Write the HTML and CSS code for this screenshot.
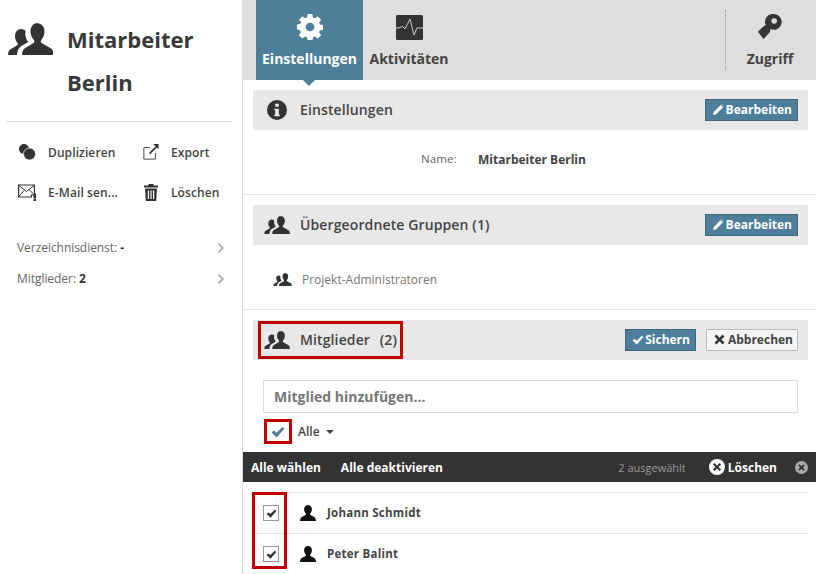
FILE: index.html
```html
<!DOCTYPE html>
<html lang="de">
<head>
<meta charset="utf-8">
<title>Mitarbeiter Berlin</title>
<link rel="stylesheet" href="styles.css">
</head>
<body>
<svg class="defs" width="0" height="0" aria-hidden="true">
  <symbol id="people" viewBox="0 0 45 32">
    <path d="M28.500 0c5 0 8 3.600 8 8.500 0 3.500-1.300 6.500-3.300 8.500-.7.800-.6 2.300.4 3l9.500 5.500c1.500.9 2 2.300 2.400 6.500H14c.3-4 1-5.500 2.500-6.500l9-5.500c1-.7 1.200-2.200.4-3-2-2-3.400-5-3.400-8.500 0-4.900 2.900-8.500 6.500-8.500z"/>
    <path d="M13 6c1.800 0 3.500.7 4.600 1.900-.9 3.800.2 8.100 2.600 11l-7.200 4.400c-1.500 1-3 3-3.600 5.700L9 32H0c.2-3.200.7-4.700 2.200-5.600l7-4.100c.8-.6.900-1.700.3-2.400C8 18.300 7 15.900 7 13.300 7 9 9.500 6 13 6z"/>
  </symbol>
  <symbol id="person" viewBox="0 0 16 16">
    <path d="M8 0c2.400 0 3.900 1.800 3.900 4.200 0 1.700-.7 3.200-1.600 4.200-.4.400-.3 1.100.2 1.500l3.700 2.200c1.100.7 1.600 1.700 1.800 3.900H0c.2-2.200.7-3.200 1.800-3.900l3.700-2.200c.5-.4.600-1.100.2-1.500-.9-1-1.600-2.500-1.600-4.200C4.100 1.800 5.600 0 8 0z"/>
  </symbol>
  <symbol id="check" viewBox="0 0 14 12">
    <path d="M.5 6.500l2.300-2 2.700 2.300L11.500 1 13.500 2.500 5.700 11.500z"/>
  </symbol>
  <symbol id="pencil" viewBox="0 0 12 12">
    <path d="M0 12l.8-3.400L8.400 1l2.600 2.600-7.600 7.600zM9.200.3l.3-.3 2.500 2.500-.3.300z"/>
  </symbol>
  <symbol id="circle-x" viewBox="0 0 16 16">
    <path fill-rule="evenodd" d="M8 0a8 8 0 1 1 0 16A8 8 0 0 1 8 0zM5.400 3.900L3.900 5.400 6.500 8l-2.600 2.600 1.500 1.500L8 9.500l2.600 2.600 1.500-1.500L9.500 8l2.600-2.600-1.500-1.500L8 6.500z"/>
  </symbol>
</svg>

<aside class="sidebar">
  <header class="profile">
    <svg class="profile-icon"><use href="#people"/></svg>
    <h1 class="profile-name">Mitarbeiter<br>Berlin</h1>
  </header>
  <ul class="actions">
    <li class="action">
      <svg class="action-icon" viewBox="0 0 18 18"><circle cx="6" cy="6" r="5"/><circle cx="11.500" cy="11" r="6" stroke="#fff" stroke-width=".7"/></svg>
      <span>Duplizieren</span>
    </li>
    <li class="action">
      <svg class="action-icon icon-export" viewBox="0 0 18 18"><path d="M8 4H1v13h13v-7" fill="none" stroke="#333" stroke-width="1"/><path d="M11.500 0H17.500v6L15.500 4 8 11.500 6.700 10.200 14.200 2.600z"/></svg>
      <span>Export</span>
    </li>
    <li class="action">
      <svg class="action-icon icon-mail" viewBox="0 0 19 17"><path d="M.6 1h15.800v10h-3v2H.6z" fill="none" stroke="#333" stroke-width="1.200"/><path d="M1 1.500l7.500 6 7.500-6M1 12.500l5-6M15.500 10l-4-4" fill="none" stroke="#333" stroke-width="1"/><path d="M15.500 9.500h2.500v5h-2.500zM15.500 15h2.500v2h-2.500z"/></svg>
      <span>E-Mail sen...</span>
    </li>
    <li class="action">
      <svg class="action-icon icon-trash" viewBox="0 0 14 17"><path d="M4.500 1.500V0h5v1.500H14V3.500H0V1.500zM1 4.500h12l-.8 12.500H1.800zM3.800 6.500v8.500h1.200V6.500zM6.400 6.500v8.500h1.200V6.500zM9 6.500v8.500h1.200V6.500z" fill-rule="evenodd"/></svg>
      <span>Löschen</span>
    </li>
  </ul>
  <ul class="meta">
    <li class="meta-row"><span>Verzeichnisdienst: <b>-</b></span><svg class="chev" viewBox="0 0 6 10"><path d="M1 0l5 5-5 5-1-1.300L3.500 5 0 1.300z"/></svg></li>
    <li class="meta-row"><span>Mitglieder: <b>2</b></span><svg class="chev" viewBox="0 0 6 10"><path d="M1 0l5 5-5 5-1-1.300L3.500 5 0 1.300z"/></svg></li>
  </ul>
</aside>

<main class="main">
  <nav class="tabs">
    <a class="tab tab-active">
      <svg class="tab-icon" viewBox="0 0 24 24"><path fill-rule="evenodd" d="M9.800 0h4.400l.6 3.200 1.700.7 2.700-1.800 3.100 3.100-1.900 2.700.7 1.700 3.200.6v4.400l-3.200.6-.7 1.700 1.900 2.700-3.100 3.100-2.700-1.900-1.700.7-.6 3.200H9.800l-.6-3.200-1.700-.7-2.700 1.900-3.100-3.100 1.900-2.700-.7-1.700L-.1 14v-4.400l3.200-.6.700-1.700L1.900 5.200 5 2.100l2.700 1.800 1.500-.7zM12 8a4 4 0 1 0 0 8 4 4 0 0 0 0-8z"/></svg>
      <span>Einstellungen</span>
    </a>
    <a class="tab tab-plain">
      <svg class="tab-icon icon-activity" viewBox="0 0 27 25"><rect width="27" height="25" rx="1.500" fill="#333"/><path d="M0 13h2l4.700-1.500L9 14 14 4l4 16 3-7h6" fill="none" stroke="#ccc" stroke-width="1"/></svg>
      <span>Aktivitäten</span>
    </a>
    <a class="tab tab-right">
      <svg class="tab-icon key" viewBox="0 0 26 28"><path fill-rule="evenodd" d="M17 0a8.500 8.500 0 1 1-3.500 16.200L13 19.500 6 27 0 19l6.500-6 2-.8A8.500 8.500 0 0 1 17 0zm.5 4.500a3 3 0 1 0 0 6 3 3 0 0 0 0-6z"/></svg>
      <span>Zugriff</span>
    </a>
  </nav>

  <section class="section">
    <div class="section-head">
      <svg class="head-icon" viewBox="0 0 22 22"><path fill-rule="evenodd" d="M11 0a11 11 0 1 1 0 22 11 11 0 0 1 0-22zM9 4v3.500h4V4zM8 9.500V11h1v5H8v2h6v-2h-1V9.500z"/></svg>
      <h2 class="head-title">Einstellungen</h2>
      <button class="btn btn-blue"><svg class="btn-icon"><use href="#pencil"/></svg>Bearbeiten</button>
    </div>
    <div class="name-row"><span class="name-label">Name:</span><strong class="name-value">Mitarbeiter Berlin</strong></div>
  </section>

  <section class="section">
    <div class="section-head">
      <svg class="head-icon people"><use href="#people"/></svg>
      <h2 class="head-title">Übergeordnete Gruppen <span class="count">(1)</span></h2>
      <button class="btn btn-blue"><svg class="btn-icon"><use href="#pencil"/></svg>Bearbeiten</button>
    </div>
    <div class="group-row"><svg class="group-icon"><use href="#people"/></svg><span>Projekt-Administratoren</span></div>
  </section>

  <section class="section section-last">
    <div class="section-head">
      <svg class="head-icon people"><use href="#people"/></svg>
      <h2 class="head-title">Mitglieder <span class="count count-gap">(2)</span></h2>
      <span class="mark mark-head"></span>
      <button class="btn btn-blue btn-save"><svg class="btn-icon btn-check"><use href="#check"/></svg>Sichern</button>
      <button class="btn btn-plain"><svg class="btn-icon btn-x" viewBox="0 0 12 12"><path d="M2.600.6L6 4l3.400-3.400 2 2L8 6l3.400 3.400-2 2L6 8l-3.400 3.400-2-2L4 6 .6 2.600z"/></svg>Abbrechen</button>
    </div>
    <div class="add-field">Mitglied hinzufügen...</div>
    <div class="select-row">
      <span class="select-all"><svg class="select-check"><use href="#check"/></svg><span class="mark mark-all"></span></span>
      <span class="select-label">Alle</span><span class="caret"></span>
    </div>
    <div class="bulk">
      <a class="bulk-link">Alle wählen</a>
      <a class="bulk-link">Alle deaktivieren</a>
      <span class="bulk-count">2 ausgewählt</span>
      <a class="bulk-delete"><svg class="bulk-x"><use href="#circle-x"/></svg>Löschen</a>
      <svg class="bulk-close"><use href="#circle-x"/></svg>
    </div>
    <div class="members">
      <span class="mark mark-rows"></span>
      <ul>
        <li class="member"><span class="box"><svg class="box-check"><use href="#check"/></svg></span><svg class="person"><use href="#person"/></svg><span class="member-name">Johann Schmidt</span></li>
        <li class="member"><span class="box"><svg class="box-check"><use href="#check"/></svg></span><svg class="person"><use href="#person"/></svg><span class="member-name">Peter Balint</span></li>
      </ul>
    </div>
  </section>
</main>
</body>
</html>
```

FILE: styles.css
```css
* { box-sizing: border-box; }
html, body { margin: 0; height: 574px; overflow: hidden; }
body { display: flex; font-family: "Open Sans", sans-serif; color: #333; background: #fff; font-size: 12px; }
svg { fill: #333; display: block; flex: none; }
.defs { position: absolute; }
ul { list-style: none; margin: 0; padding: 0; }
h1, h2 { margin: 0; }
button { font-family: inherit; }

.sidebar { width: 243px; flex: none; border-right: 1px solid #ddd; height: 574px; padding: 0 10px 0 6px; }
.profile { display: flex; height: 122px; border-bottom: 1px solid #d8d8d8; padding: 23px 0 0 2px; }
.profile-icon { width: 45px; height: 32px; }
.profile-name { font-size: 22px; font-weight: 700; line-height: 43px; margin: -5px 0 0 14px; color: #3a3a3a; }
.actions { display: grid; grid-template-columns: 125px 1fr; row-gap: 22px; padding: 21px 0 0 12px; }
.action { display: flex; align-items: center; height: 18px; font-size: 12px; font-weight: 600; color: #444; gap: 12px; letter-spacing: .1px; }
.action:nth-child(even) { gap: 10px; }
.action-icon { width: 18px; height: 18px; }
.icon-export { width: 16px; height: 16px; margin: 0 2px 0 0; }
.icon-mail { width: 19px; height: 17px; margin-right: -1px; }
.icon-trash { width: 14px; height: 17px; margin: 0 3px 0 1px; }
.meta { padding: 31px 6px 0 11px; }
.meta-row { display: flex; justify-content: space-between; align-items: center; height: 31px; color: #666; font-size: 12px; letter-spacing: -.05px; padding-right: 2px; }
.meta-row b { color: #333; }
.chev { width: 6px; height: 10px; fill: #aaa; }

.main { flex: 1; min-width: 0; }
.tabs { display: flex; height: 80px; background: #dedede; margin-left: -1px; padding-left: 14px; }
.tab { display: flex; flex-direction: column; align-items: center; font-size: 14px; font-weight: 700; color: #444; padding-top: 14px; height: 80px; position: relative; }
.tab span { margin-top: 9px; line-height: 20px; }
.tab-icon { width: 26px; height: 26px; }
.icon-activity { width: 27px; height: 25px; margin-top: 1px; }
.tab-active { width: 107px; background: #4d7f9b; color: #fff; }
.tab-active .tab-icon { fill: #fff; }
.tab-active::after { content: ""; position: absolute; left: 47px; top: 80px; border: 6px solid transparent; border-top-color: #4d7f9b; border-bottom: 0; }
.tab-plain { width: 92px; }
.tab-right { margin-left: auto; width: 91px; border-left: 1px dotted #999; margin-top: 10px; height: 60px; padding: 4px 2px 0 0; }
.key { fill: #333; }

.section { padding: 10px 8px 0 10px; height: 115px; border-bottom: 1px solid #e6e6e6; }
.section-last { height: auto; border: 0; }
.section-head { display: flex; align-items: center; height: 40px; background: #e8e8e8; padding: 0 10px 0 14px; position: relative; }
.head-icon { width: 20px; height: 20px; margin-right: 13px; }
.head-icon.people { width: 26px; height: 18px; margin: 0 10px 0 -3px; }
.head-title { font-size: 14px; font-weight: 600; color: #444; flex: 1; letter-spacing: .12px; margin-top: -2px; }
.count-gap { margin-left: 6px; }
.btn { display: flex; align-items: center; height: 22px; padding: 0 5px 1px 7px; font-size: 12px; font-weight: 700; }
.btn + .btn { margin-left: 10px; }
.btn-blue { background: #4d7f9b; border: 1px solid #3e667c; color: #fff; }
.btn-save { padding-left: 6px; }
.btn-plain { background: #f5f5f5; border: 1px solid #bbb; color: #444; padding: 0 4px 1px 7px; }
.btn-icon { width: 11px; height: 11px; margin-right: 2px; fill: #fff; }
.btn-check { width: 12px; height: 10px; margin-right: 1px; }
.btn-x { fill: #333; margin-right: 3px; }

.name-row { display: flex; padding-top: 21px; font-size: 12px; }
.name-label { margin-left: 168px; width: 57px; color: #666; font-size: 11.600px; }
.name-value { font-weight: 700; color: #444; }
.group-row { display: flex; align-items: center; padding: 26px 0 0 20px; font-size: 12px; color: #777; }
.group-icon { width: 19px; height: 13px; margin-right: 10px; }

.add-field { height: 33px; margin: 20px 10px 0 10px; border: 1px solid #ddd; font-size: 14px; font-weight: 700; color: #777; line-height: 31px; padding-left: 10px; }
.select-row { display: flex; align-items: center; height: 25px; margin: 6px 0 0 11px; }
.select-all { width: 28px; height: 25px; position: relative; display: flex; align-items: center; justify-content: center; }
.select-check { width: 14px; height: 12px; fill: #4d7f9b; }
.select-label { font-size: 12px; font-weight: 600; color: #444; margin-left: 6px; }
.caret { border: 4px solid transparent; border-top-color: #444; border-bottom: 0; margin-left: 6px; }
.bulk { display: flex; align-items: center; height: 30px; margin: 8px -8px 0 -10px; background: #333; color: #fff; font-size: 12px; font-weight: 700; padding: 0 8px; }
.bulk-link + .bulk-link { margin-left: 20px; }
.bulk-count { margin-left: auto; font-weight: 400; color: #999; font-size: 11px; }
.bulk-delete { display: flex; align-items: center; margin-left: 23px; }
.bulk-x { width: 16px; height: 16px; fill: #fff; margin-right: 3px; }
.bulk-close { width: 13px; height: 13px; fill: #aaa; margin-left: 18px; }
.members { margin-top: 10px; position: relative; }
.member { display: flex; align-items: center; height: 41px; border-top: 1px solid #e6e6e6; padding-left: 10px; }
.box { width: 16px; height: 16px; border: 1px solid #999; display: flex; align-items: center; justify-content: center; background: #fff; }
.box-check { width: 11px; height: 9px; }
.person { width: 16px; height: 16px; margin-left: 21px; fill: #111; }
.member-name { margin-left: 11px; font-size: 11.500px; font-weight: 700; color: #444; letter-spacing: .25px; margin-top: -1px; }

.mark { position: absolute; border: 3px solid #c00000; pointer-events: none; }
.mark-head { left: 5px; top: 1px; width: 145px; height: 38px; }
.mark-all { left: 0; top: 0; width: 28px; height: 25px; }
.mark-rows { left: -1px; top: 0; width: 35px; height: 77px; }
```
